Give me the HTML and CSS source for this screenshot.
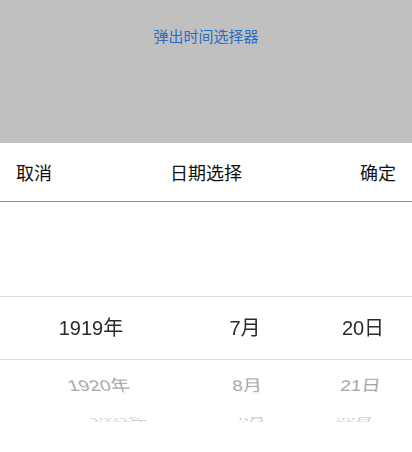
FILE: index.html
```html
<!DOCTYPE html>
<html lang="zh-CN">
<head>
<meta charset="utf-8">
<title>日期选择</title>
<link rel="stylesheet" href="styles.css">
</head>
<body>
<div class="backdrop">
  <div class="open-btn">弹出时间选择器</div>
</div>
<div class="sheet">
  <div class="sheet-header">
    <span class="action">取消</span>
    <span class="title">日期选择</span>
    <span class="action">确定</span>
  </div>
  <div class="picker">
    <div class="band">
      <div class="col col-year">
        <div class="item sel">1919年</div>
        <div class="item near">1920年</div>
        <div class="item far">1921年</div>
      </div>
      <div class="col col-month">
        <div class="item sel">7月</div>
        <div class="item near">8月</div>
        <div class="item far">9月</div>
      </div>
      <div class="col col-day">
        <div class="item sel">20日</div>
        <div class="item near">21日</div>
        <div class="item far">22日</div>
      </div>
    </div>
  </div>
</div>
</body>
</html>
```

FILE: styles.css
```css
html, body {
  margin: 0;
  padding: 0;
  background: #ffffff;
  font-family: "Noto Sans CJK SC", sans-serif;
}

.backdrop {
  height: 143px;
  background: #c0c0c0;
  padding-top: 26px;
  box-sizing: border-box;
}

.open-btn {
  text-align: center;
  font-size: 15px;
  line-height: 20px;
  color: #2b6cc6;
}

.sheet {
  background: #ffffff;
  height: 309px;
  overflow: hidden;
}

.sheet-header {
  height: 58px;
  border-bottom: 1px solid #8c8c8c;
  display: flex;
  align-items: center;
  justify-content: space-between;
  padding: 0 16px;
  font-size: 18px;
  color: #111111;
}

.picker {
  padding-top: 94px;
  height: 250px;
  box-sizing: border-box;
}

.band {
  height: 62px;
  border-top: 1px solid #dcdcdc;
  border-bottom: 1px solid #dcdcdc;
  display: grid;
  grid-template-columns: 182px 126px 104px;
  font-family: "Liberation Sans", "Noto Sans CJK SC", sans-serif;
  font-size: 20px;
}

.col {
  display: grid;
  perspective: 400px;
}

.col-year { perspective-origin: 300px 50%; }
.col-month { perspective-origin: 118px 50%; }
.col-day { perspective-origin: -10px 50%; padding-left: 6px; }

.item {
  grid-area: 1 / 1;
  height: 62px;
  line-height: 62px;
  text-align: center;
  white-space: nowrap;
  backface-visibility: hidden;
}

.item.sel { color: #2a2a2a; }

.item.near {
  color: #a3a3a3;
  transform: translateZ(-120px) rotateX(-30deg) translateZ(120px);
}

.item.far {
  color: #cbcbcb;
  transform: translateZ(-122px) rotateX(-60deg) translateZ(122px);
}
```
